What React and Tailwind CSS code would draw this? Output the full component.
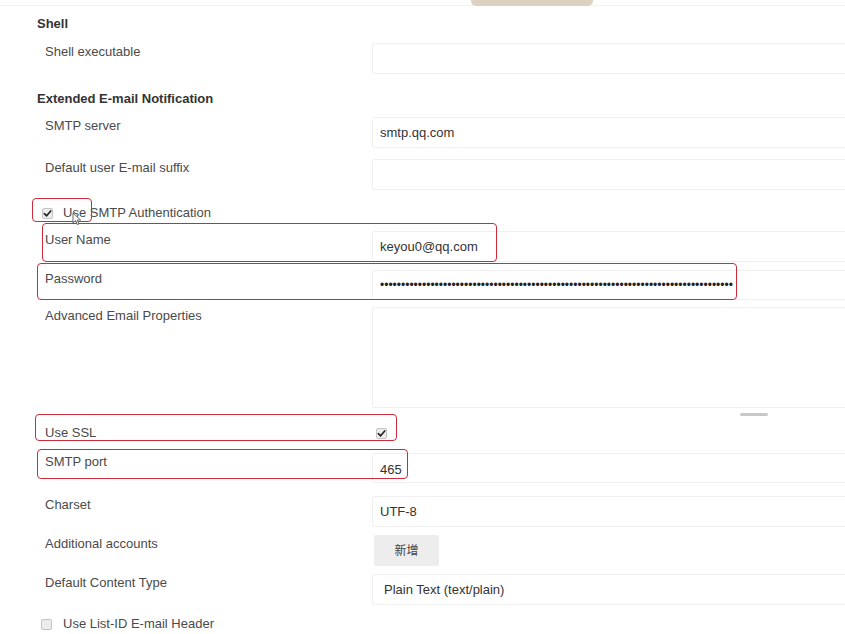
import React from 'react';

const Check = ({ checked }) => (
  <span className="flex w-[11px] h-[11px] items-center justify-center rounded-[2px] border border-[#c4c4c4] bg-[#ececec]">
    {checked && (
      <svg width="9" height="9" viewBox="0 0 10 10">
        <path d="M1.5 5.2 L4 7.6 L8.6 2.2" fill="none" stroke="#222" strokeWidth="1.8" strokeLinecap="round" strokeLinejoin="round" />
      </svg>
    )}
  </span>
);

function Row({ label, mt, children }) {
  return (
    <div className="flex items-start" style={{ marginTop: mt }}>
      <div className="w-[372px] shrink-0 pl-[45px] pt-[1px] text-[13px] leading-[16px] text-[#4a4a4a]">{label}</div>
      <div className="flex-1 -mr-[10px]">{children}</div>
    </div>
  );
}

const Field = ({ value, children, h = 'h-[31px]' }) => (
  <div className={`${h} border border-[#f0f0f0] rounded-[2px] flex items-center pl-[7px] text-[13px] text-[#333] bg-white`}>
    {children || value}
  </div>
);

const Mark = ({ l, t, w, h }) => (
  <div
    className="absolute border-[1.5px] border-[#cc2b3b] rounded-[4px] pointer-events-none"
    style={{ left: l, top: t, width: w, height: h }}
  />
);

export default function App() {
  const dots = '•'.repeat(84);
  return (
    <div
      className="relative w-[845px] h-[634px] overflow-hidden bg-white"
      style={{ fontFamily: '"Liberation Sans", Arial, "Noto Sans CJK SC", sans-serif' }}
    >
      <div className="h-[6px] border-b border-[#f2f2f2] pl-[471px]">
        <div className="w-[122px] h-[6px] bg-[#dcd2c2] rounded-b-[5px]" />
      </div>

      <div className="mt-[10px] pl-[37px] text-[13px] leading-[16px] font-bold text-[#333]">Shell</div>
      <Row label="Shell executable" mt={11}>
        <Field />
      </Row>

      <div className="mt-[17px] pl-[37px] text-[13px] leading-[16px] font-bold text-[#333]">Extended E-mail Notification</div>
      <Row label="SMTP server" mt={10}>
        <Field value="smtp.qq.com" />
      </Row>
      <Row label="Default user E-mail suffix" mt={11}>
        <Field />
      </Row>

      <div className="mt-[15px] flex items-center h-[16px] pl-[42px] text-[13px] text-[#4a4a4a]">
        <Check checked />
        <span className="ml-[10px]">Use SMTP Authentication</span>
      </div>

      <Row label="User Name" mt={10}>
        <Field value="keyou0@qq.com" />
      </Row>
      <Row label="Password" mt={8}>
        <Field h="h-[30px]">
          <span className="text-[12px] text-[#222]">{dots}</span>
        </Field>
      </Row>
      <Row label="Advanced Email Properties" mt={7}>
        <div className="h-[101px] border border-[#f0f0f0] rounded-[2px]" />
        <div className="mt-[5px] ml-[368px] w-[28px] h-[3px] bg-[#c8c8c8] rounded-full" />
      </Row>

      <div className="flex items-start mt-[9px] h-[16px]">
        <div className="w-[372px] shrink-0 pl-[45px] text-[13px] leading-[16px] text-[#4a4a4a]">Use SSL</div>
        <div className="flex pl-[4px] pt-[3px]"><Check checked /></div>
      </div>

      <Row label="SMTP port" mt={12}>
        <Field h="h-[30px]">
          <span className="pt-[3px]">465</span>
        </Field>
      </Row>
      <Row label="Charset" mt={13}>
        <Field value="UTF-8" />
      </Row>
      <Row label="Additional accounts" mt={8}>
        <div className="ml-[2px] w-[65px] h-[31px] bg-[#ededed] rounded-[2px] flex items-center justify-center text-[12px] text-[#444]">
          新增
        </div>
      </Row>
      <Row label="Default Content Type" mt={8}>
        <Field h="h-[31px]">
          <span className="pl-[4px]">Plain Text (text/plain)</span>
        </Field>
      </Row>

      <div className="mt-[11px] flex items-center h-[16px] pl-[41px] text-[13px] text-[#4a4a4a]">
        <Check />
        <span className="ml-[11px]">Use List-ID E-mail Header</span>
      </div>

      <Mark l={32} t={198} w={60} h={24} />
      <Mark l={42} t={223} w={455} h={39} />
      <Mark l={37} t={263} w={700} h={37} />
      <Mark l={35} t={414} w={362} h={27} />
      <Mark l={37} t={449} w={371} h={30} />

      <svg className="absolute" style={{ left: 72, top: 212 }} width="10" height="14" viewBox="0 0 10 14">
        <path d="M1 1 L1 11 L3.6 8.6 L5.4 12.6 L7 11.9 L5.3 8 L8.6 8 Z" fill="#fff" stroke="#555" strokeWidth="0.9" />
      </svg>
    </div>
  );
}
